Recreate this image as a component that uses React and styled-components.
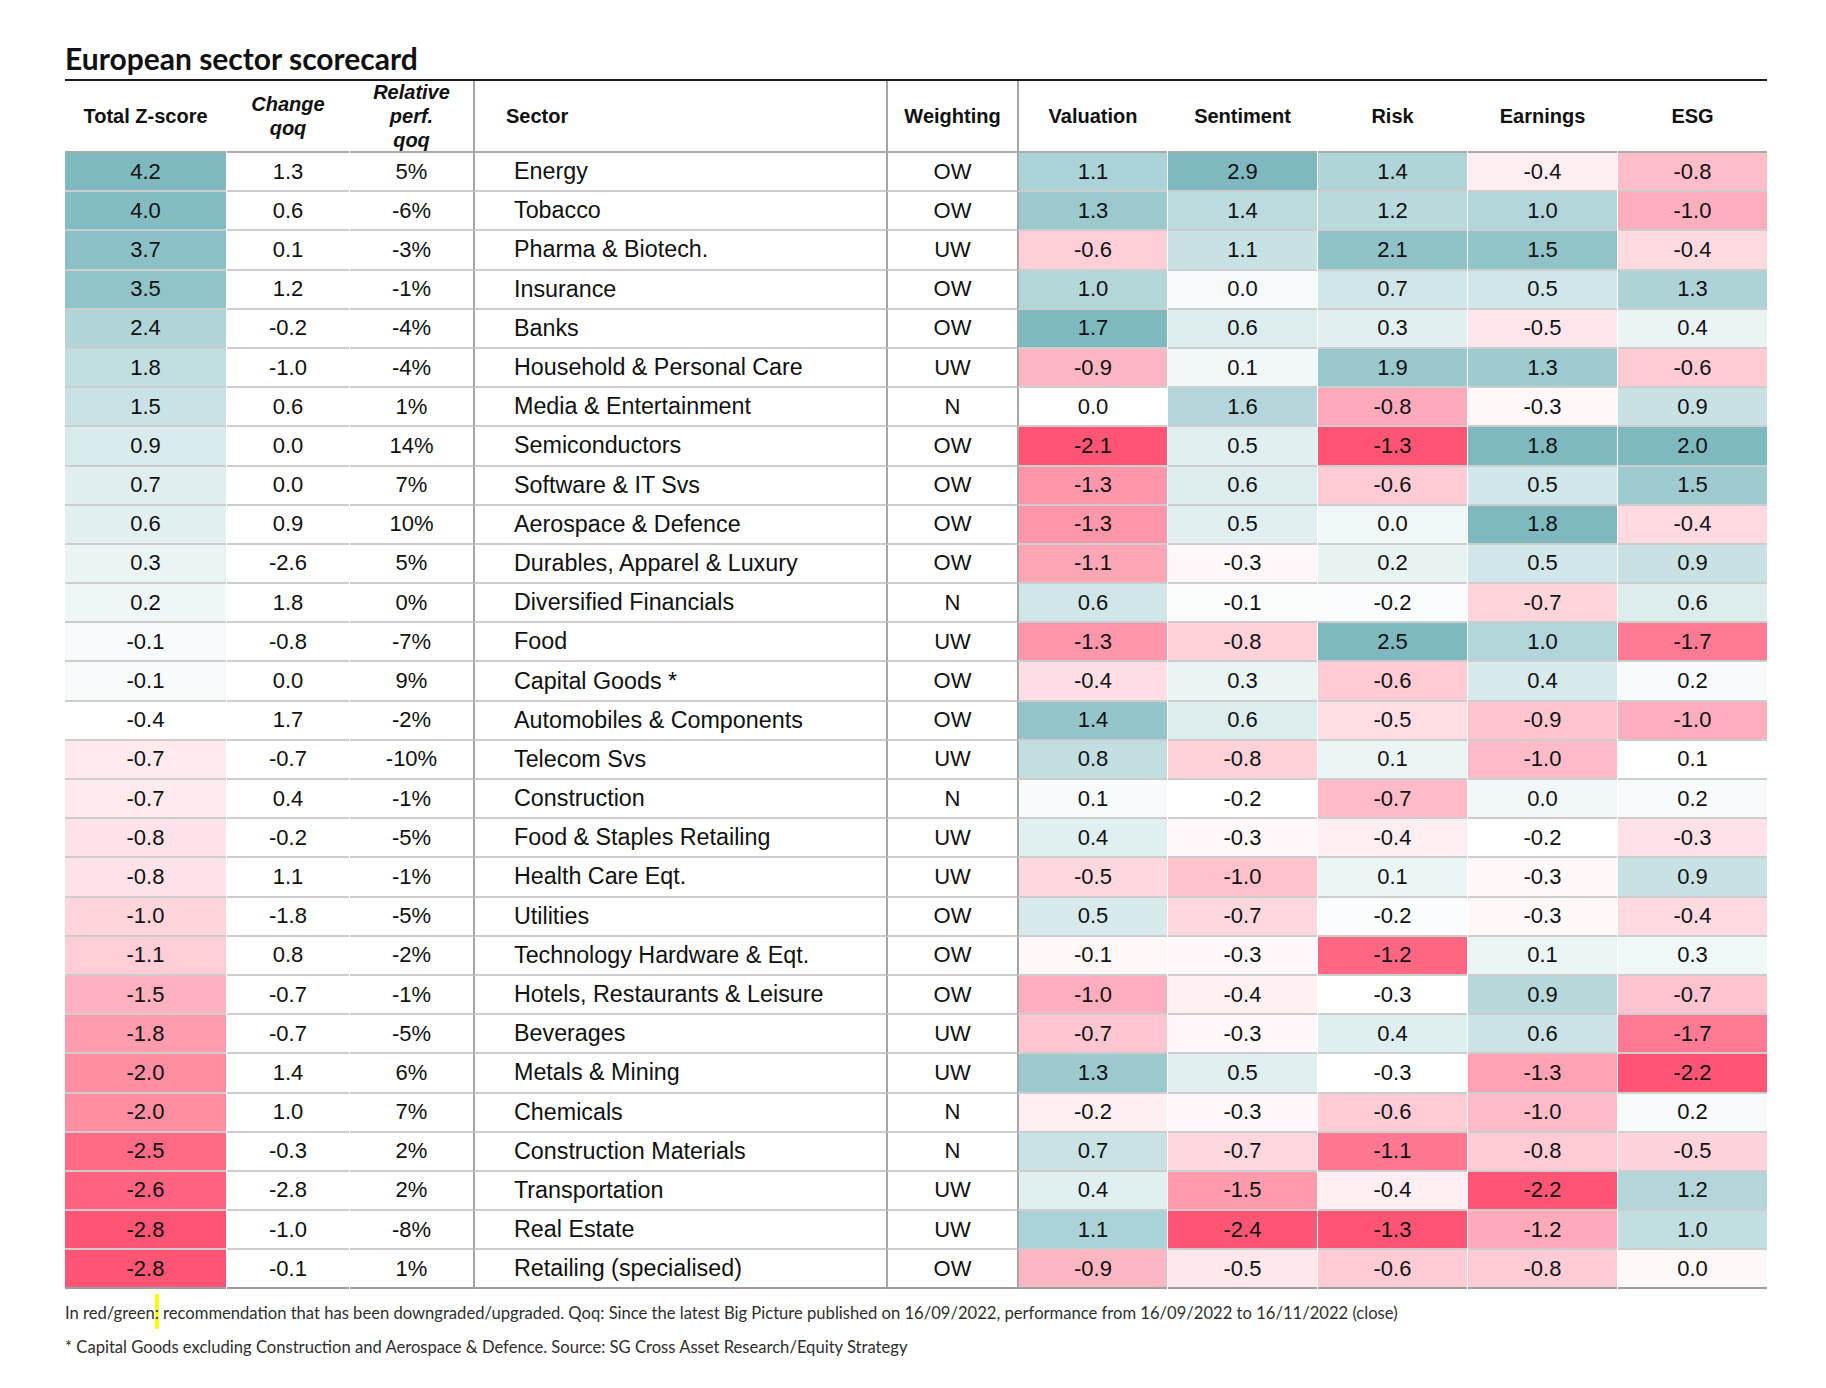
import React from 'react';
import styled, { createGlobalStyle } from 'styled-components';

const GlobalStyle = createGlobalStyle`
	body {
		margin: 0;
		background: #ffffff;
	}
`;

// Total, Change, Rel, Sector, Weighting, Valuation, Sentiment, Risk, Earnings, ESG
const rows = [
	[4.2, '1.3', '5%', 'Energy', 'OW', 1.1, 2.9, 1.4, -0.4, -0.8],
	[4.0, '0.6', '-6%', 'Tobacco', 'OW', 1.3, 1.4, 1.2, 1.0, -1.0],
	[3.7, '0.1', '-3%', 'Pharma & Biotech.', 'UW', -0.6, 1.1, 2.1, 1.5, -0.4],
	[3.5, '1.2', '-1%', 'Insurance', 'OW', 1.0, 0.0, 0.7, 0.5, 1.3],
	[2.4, '-0.2', '-4%', 'Banks', 'OW', 1.7, 0.6, 0.3, -0.5, 0.4],
	[1.8, '-1.0', '-4%', 'Household & Personal Care', 'UW', -0.9, 0.1, 1.9, 1.3, -0.6],
	[1.5, '0.6', '1%', 'Media & Entertainment', 'N', 0.0, 1.6, -0.8, -0.3, 0.9],
	[0.9, '0.0', '14%', 'Semiconductors', 'OW', -2.1, 0.5, -1.3, 1.8, 2.0],
	[0.7, '0.0', '7%', 'Software & IT Svs', 'OW', -1.3, 0.6, -0.6, 0.5, 1.5],
	[0.6, '0.9', '10%', 'Aerospace & Defence', 'OW', -1.3, 0.5, 0.0, 1.8, -0.4],
	[0.3, '-2.6', '5%', 'Durables, Apparel & Luxury', 'OW', -1.1, -0.3, 0.2, 0.5, 0.9],
	[0.2, '1.8', '0%', 'Diversified Financials', 'N', 0.6, -0.1, -0.2, -0.7, 0.6],
	[-0.1, '-0.8', '-7%', 'Food', 'UW', -1.3, -0.8, 2.5, 1.0, -1.7],
	[-0.1, '0.0', '9%', 'Capital Goods *', 'OW', -0.4, 0.3, -0.6, 0.4, 0.2],
	[-0.4, '1.7', '-2%', 'Automobiles & Components', 'OW', 1.4, 0.6, -0.5, -0.9, -1.0],
	[-0.7, '-0.7', '-10%', 'Telecom Svs', 'UW', 0.8, -0.8, 0.1, -1.0, 0.1],
	[-0.7, '0.4', '-1%', 'Construction', 'N', 0.1, -0.2, -0.7, 0.0, 0.2],
	[-0.8, '-0.2', '-5%', 'Food & Staples Retailing', 'UW', 0.4, -0.3, -0.4, -0.2, -0.3],
	[-0.8, '1.1', '-1%', 'Health Care Eqt.', 'UW', -0.5, -1.0, 0.1, -0.3, 0.9],
	[-1.0, '-1.8', '-5%', 'Utilities', 'OW', 0.5, -0.7, -0.2, -0.3, -0.4],
	[-1.1, '0.8', '-2%', 'Technology Hardware & Eqt.', 'OW', -0.1, -0.3, -1.2, 0.1, 0.3],
	[-1.5, '-0.7', '-1%', 'Hotels, Restaurants & Leisure', 'OW', -1.0, -0.4, -0.3, 0.9, -0.7],
	[-1.8, '-0.7', '-5%', 'Beverages', 'UW', -0.7, -0.3, 0.4, 0.6, -1.7],
	[-2.0, '1.4', '6%', 'Metals & Mining', 'UW', 1.3, 0.5, -0.3, -1.3, -2.2],
	[-2.0, '1.0', '7%', 'Chemicals', 'N', -0.2, -0.3, -0.6, -1.0, 0.2],
	[-2.5, '-0.3', '2%', 'Construction Materials', 'N', 0.7, -0.7, -1.1, -0.8, -0.5],
	[-2.6, '-2.8', '2%', 'Transportation', 'UW', 0.4, -1.5, -0.4, -2.2, 1.2],
	[-2.8, '-1.0', '-8%', 'Real Estate', 'UW', 1.1, -2.4, -1.3, -1.2, 1.0],
	[-2.8, '-0.1', '1%', 'Retailing (specialised)', 'OW', -0.9, -0.5, -0.6, -0.8, 0.0],
];

const SCORED = [0, 5, 6, 7, 8, 9];
const TEAL = [125, 185, 191];
const RED = [255, 85, 116];

// 3-colour scale per column: min red, median white, max teal
const scales = {};
SCORED.forEach(i => {
	const vals = rows.map(r => r[i]).sort((a, b) => a - b);
	scales[i] = { min: vals[0], mid: vals[Math.floor(vals.length / 2)], max: vals[vals.length - 1] };
});

const mix = (target, t) =>
	`rgb(${target.map(c => Math.round(255 - (255 - c) * t)).join(',')})`;

const cellColour = (i, v) => {
	const { min, mid, max } = scales[i];
	if (v >= mid) return mix(TEAL, max === mid ? 0 : (v - mid) / (max - mid));
	return mix(RED, (mid - v) / (mid - min));
};

const fmt = v => v.toFixed(1);

const App = () => {
	return (
		<Page>
			<GlobalStyle />
			<Title>European sector scorecard</Title>
			<Table>
				<HeadRow>
					<HeadCell>Total Z-score</HeadCell>
					<HeadCell $italic>Change<br />qoq</HeadCell>
					<HeadCell $italic>Relative<br />perf.<br />qoq</HeadCell>
					<HeadCell $left $divider>Sector</HeadCell>
					<HeadCell $divider>Weighting</HeadCell>
					<HeadCell $divider>Valuation</HeadCell>
					<HeadCell>Sentiment</HeadCell>
					<HeadCell>Risk</HeadCell>
					<HeadCell>Earnings</HeadCell>
					<HeadCell>ESG</HeadCell>
				</HeadRow>
				{rows.map((r, ri) => {
					const last = ri === rows.length - 1;
					return (
						<Row key={r[3]}>
							<Cell $last={last} style={{ background: cellColour(0, r[0]) }}>{fmt(r[0])}</Cell>
							<Cell $last={last}>{r[1]}</Cell>
							<Cell $last={last}>{r[2]}</Cell>
							<Cell $last={last} $left $divider>{r[3]}</Cell>
							<Cell $last={last} $divider>{r[4]}</Cell>
							{[5, 6, 7, 8, 9].map(i => (
								<Cell
									key={i}
									$last={last}
									$divider={i === 5}
									style={{ background: cellColour(i, r[i]) }}
								>
									{fmt(r[i])}
								</Cell>
							))}
						</Row>
					);
				})}
			</Table>
			<Footer>
				<Note>
					In red/green<Mark>:</Mark> recommendation that has been downgraded/upgraded. Qoq: Since the latest Big
					Picture published on 16/09/2022, performance from 16/09/2022 to 16/11/2022 (close)
				</Note>
				<Note>
					* Capital Goods excluding Construction and Aerospace &amp; Defence. Source: SG Cross Asset Research/Equity
					Strategy
				</Note>
			</Footer>
		</Page>
	);
};

const Page = styled.div`
	padding: 40px 0 40px 65px;
	width: 1702px;
`;

const Title = styled.h1`
	margin: 0 0 3px;
	font-family: Lato, 'Open Sans', sans-serif;
	font-weight: 700;
	font-size: 30px;
	line-height: 36px;
	color: #111;
`;

const Table = styled.div`
	border-top: 2px solid #1a1a1a;
	font-family: 'Liberation Sans', Arial, sans-serif;
	color: #111;
`;

const columns = '161px 122px 123px 412px 130px 149px 149px 149px 149px 149px';

const HeadRow = styled.div`
	display: grid;
	grid-template-columns: ${columns};
	column-gap: 1px;
`;

const Row = styled.div`
	display: grid;
	grid-template-columns: ${columns};
	column-gap: 1px;
`;

const HeadCell = styled.div`
	box-sizing: border-box;
	height: 72px;
	display: flex;
	align-items: center;
	justify-content: ${p => (p.$left ? 'flex-start' : 'center')};
	padding-left: ${p => (p.$left ? '31px' : '0')};
	text-align: center;
	font-weight: 700;
	font-size: 20px;
	line-height: 24px;
	font-style: ${p => (p.$italic ? 'italic' : 'normal')};
	border-bottom: 2px solid #a9a9a9;
	border-left: ${p => (p.$divider ? '2px solid #a6a6a6' : 'none')};
	margin-left: ${p => (p.$divider ? '-1px' : '0')};
`;

const Cell = styled.div`
	box-sizing: border-box;
	height: 39.2px;
	display: flex;
	align-items: center;
	justify-content: ${p => (p.$left ? 'flex-start' : 'center')};
	padding-left: ${p => (p.$left ? '39px' : '0')};
	font-size: ${p => (p.$left ? '23.3px' : '22px')};
	white-space: nowrap;
	border-bottom: 2px solid ${p => (p.$last ? '#9e9e9e' : '#cdcdcd')};
	border-left: ${p => (p.$divider ? '2px solid #a6a6a6' : 'none')};
	margin-left: ${p => (p.$divider ? '-1px' : '0')};
`;

const Footer = styled.div`
	padding-top: 14px;
	display: flex;
	flex-direction: column;
	gap: 14px;
`;

const Note = styled.div`
	font-family: Lato, 'Open Sans', sans-serif;
	font-size: 16.6px;
	line-height: 20px;
	color: #2e2e2e;
	white-space: nowrap;
`;

const Mark = styled.span`
	position: relative;

	&::before {
		content: '';
		position: absolute;
		left: 0;
		top: -9px;
		bottom: -6px;
		width: 4px;
		background: #ffff00;
		z-index: -1;
	}
`;

export default App;
